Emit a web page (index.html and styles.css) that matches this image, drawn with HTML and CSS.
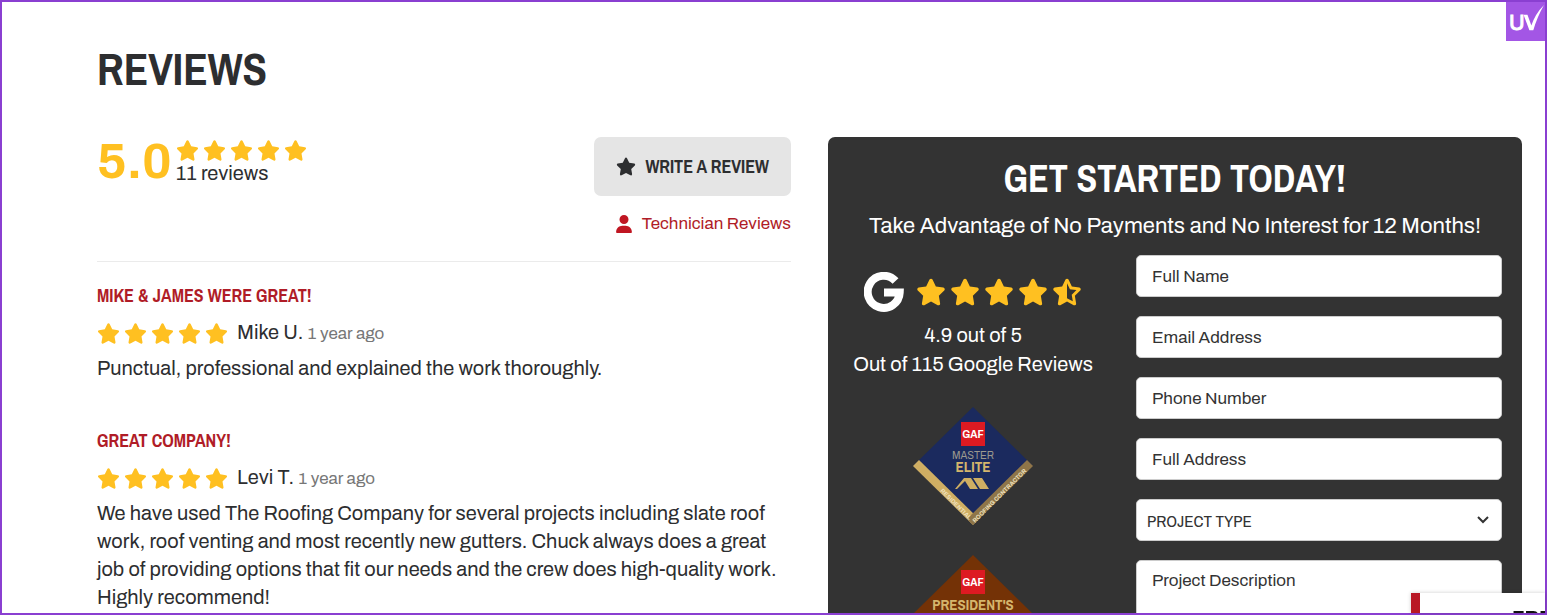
FILE: index.html
```
<!DOCTYPE html>
<html lang="en">
<head>
  <meta charset="UTF-8">
  <meta name="viewport" content="width=device-width, initial-scale=1.0">
  <title>Reviews</title>
  <link rel="stylesheet" href="styles.css">
</head>
<body>

  <!-- Shared icons -->
  <svg class="sprite" aria-hidden="true">
    <symbol id="star" viewBox="0 0 576 512">
      <path d="M316.9 18C311.6 7 300.4 0 288.1 0s-23.4 7-28.8 18L195 150.3 51.4 171.5c-12 1.8-22 10.2-25.7 21.7s-.7 24.2 7.9 32.7L137.8 329 113.2 474.7c-2 12 3 24.2 12.9 31.3s23 8 33.8 2.3l128.3-68.5 128.3 68.5c10.8 5.7 23.9 4.9 33.8-2.3s14.9-19.3 12.9-31.3L438.5 329 542.7 225.9c8.6-8.5 11.7-21.2 7.9-32.7s-13.7-19.9-25.7-21.7L381.2 150.3 316.9 18z"/>
    </symbol>
    <symbol id="half" viewBox="0 0 576 512">
      <path d="M288 376.4l.1-.1 26.4 14.1 85.2 45.5-16.5-97.6-4.8-28.7 20.7-20.5 70.1-69.3-96.1-14.2-29.3-4.3-12.9-26.6L288.1 86.9l-.1 .3V376.4zm175.1 98.3c2 12-3 24.2-12.9 31.3s-23 8-33.8 2.3L288.1 439.8 159.8 508.3C149 514 135.9 513.1 126 506s-14.9-19.3-12.9-31.3L137.8 329 33.6 225.9c-8.6-8.5-11.7-21.2-7.9-32.7s13.7-19.9 25.7-21.7L195 150.3 259.4 18c5.4-11 16.5-18 28.8-18s23.4 7 28.8 18l64.3 132.3 143.6 21.2c12 1.8 22 10.2 25.7 21.7s.7 24.2-7.9 32.7L438.5 329l24.6 145.7z"/>
    </symbol>
    <symbol id="user" viewBox="0 0 448 512">
      <path d="M224 256A128 128 0 1 0 224 0a128 128 0 1 0 0 256zm-45.7 48C79.8 304 0 383.8 0 482.3C0 498.7 13.3 512 29.7 512H418.3c16.4 0 29.7-13.3 29.7-29.7C448 383.8 368.2 304 269.7 304H178.3z"/>
    </symbol>
  </svg>

  <main class="page">
    <h1>Reviews</h1>

    <div class="columns">
      <section class="reviews">
        <div class="summary">
          <div class="score">
            <span class="number">5.0</span>
            <div class="total">
              <div class="stars">
                <svg><use href="#star"/></svg><svg><use href="#star"/></svg><svg><use href="#star"/></svg><svg><use href="#star"/></svg><svg><use href="#star"/></svg>
              </div>
              <span>11 reviews</span>
            </div>
          </div>
          <div class="actions">
            <button type="button" class="write"><svg><use href="#star"/></svg>Write a Review</button>
            <a href="#" class="tech"><svg><use href="#user"/></svg>Technician Reviews</a>
          </div>
        </div>

        <article class="review">
          <h2>Mike &amp; James were great!</h2>
          <div class="author">
            <div class="stars">
              <svg><use href="#star"/></svg><svg><use href="#star"/></svg><svg><use href="#star"/></svg><svg><use href="#star"/></svg><svg><use href="#star"/></svg>
            </div>
            <span>Mike U. <small>1 year ago</small></span>
          </div>
          <p>Punctual, professional and explained the work thoroughly.</p>
        </article>

        <article class="review">
          <h2>Great company!</h2>
          <div class="author">
            <div class="stars">
              <svg><use href="#star"/></svg><svg><use href="#star"/></svg><svg><use href="#star"/></svg><svg><use href="#star"/></svg><svg><use href="#star"/></svg>
            </div>
            <span>Levi T. <small>1 year ago</small></span>
          </div>
          <p>We have used The Roofing Company for several projects including slate roof work, roof venting and most recently new gutters. Chuck always does a great job of providing options that fit our needs and the crew does high-quality work. Highly recommend!</p>
        </article>
      </section>

      <section class="start">
        <h2>Get Started Today!</h2>
        <p class="offer">Take Advantage of No Payments and No Interest for 12 Months!</p>

        <div class="start-body">
          <div class="trust">
            <div class="google">
              <svg class="g" viewBox="0 0 40 40"><path d="M31.5 9A16 16 0 1 0 35.7 20.5H20"/></svg>
              <div class="stars large">
                <svg><use href="#star"/></svg><svg><use href="#star"/></svg><svg><use href="#star"/></svg><svg><use href="#star"/></svg><svg><use href="#half"/></svg>
              </div>
            </div>
            <p>4.9 out of 5<br>Out of 115 Google Reviews</p>

            <svg class="badge" viewBox="0 0 120 120">
              <path d="M60 0L119 58 60 117 1 58z" fill="#1b2a5e"/>
              <path d="M6 53L0 59 60 118 66 112z" fill="#cfae63"/>
              <path d="M114 53L120 59 60 118 54 112z" fill="#8f7548"/>
              <rect x="48" y="15" width="24" height="24" fill="#dd1a22"/>
              <text x="60" y="31" class="gaf">GAF</text>
              <text x="60" y="52" class="master">MASTER</text>
              <text x="60" y="65" class="elite">ELITE</text>
              <path d="M42 82L51 71H58L65 82H57L52 74 44 82zM60 71H69L76 82H67z" fill="#cfae63"/>
              <text class="band" transform="translate(27 84) rotate(45)">RESIDENTIAL</text>
              <text class="band" transform="translate(62 116) rotate(-45)">ROOFING CONTRACTOR</text>
            </svg>

            <svg class="badge" viewBox="0 0 120 120">
              <path d="M60 0L119 58 60 117 1 58z" fill="#743206"/>
              <rect x="48" y="15" width="24" height="24" fill="#dd1a22"/>
              <text x="60" y="31" class="gaf">GAF</text>
              <text x="60" y="55" class="president">PRESIDENT'S</text>
            </svg>
          </div>

          <form class="form">
            <input type="text" aria-label="Full Name" placeholder="Full Name">
            <input type="email" aria-label="Email Address" placeholder="Email Address">
            <input type="tel" aria-label="Phone Number" placeholder="Phone Number">
            <input type="text" aria-label="Full Address" placeholder="Full Address">
            <select aria-label="Project Type">
              <option>PROJECT TYPE</option>
            </select>
            <textarea aria-label="Project Description" placeholder="Project Description"></textarea>
          </form>
        </div>
      </section>
    </div>
  </main>

  <div class="uv">
    <svg viewBox="0 0 40 40">
      <text x="3" y="29">U</text>
      <path d="M18 13H22L26 24Q30 12 39 3 32 15 28 29H24z"/>
    </svg>
  </div>
  <aside class="popup">FREE</aside>

</body>
</html>
```
FILE: styles.css
```
* {
  box-sizing: border-box;
}

body {
  margin: 0;
  height: 100vh;
  overflow: hidden;
  border: 2px solid #8a3fd1;
  background-color: #fff;
  color: #2d2e30;
  font-family: "Archivo", "Liberation Sans", Arial, sans-serif;
  font-size: 20px;
  line-height: 28px;
}

h1, h2, p {
  margin: 0;
}

h1, h2, .write {
  font-family: "Archivo Narrow", "Liberation Sans Narrow", "Liberation Sans", sans-serif;
  font-weight: bold;
  text-transform: uppercase;
}

h1 {
  font-size: 45px;
  line-height: 54px;
}

.sprite {
  display: none;
}

.page {
  padding: 40px 23px 0 95px;
}

.columns {
  display: grid;
  grid-template-columns: 1fr 1fr;
  gap: 37px;
  margin-top: 41px;
}

.stars {
  display: flex;
  gap: 4px;
}

.stars svg {
  width: 23px;
  height: 21px;
  fill: #ffc021;
}

.summary {
  display: flex;
  justify-content: space-between;
  height: 125px;
  border-bottom: 1px solid #ebebeb;
}

.score {
  display: flex;
  gap: 4px;
}

.number {
  color: #ffc021;
  font-size: 50px;
  font-weight: bold;
  line-height: 50px;
}

.total {
  padding-top: 3px;
  line-height: 24px;
}

.actions {
  display: flex;
  flex-direction: column;
  align-items: flex-end;
  gap: 14px;
}

.write {
  display: flex;
  align-items: center;
  gap: 9px;
  padding: 0 22px;
  height: 59px;
  border: none;
  border-radius: 7px;
  background-color: #e5e5e5;
  color: #2d2e30;
  font-size: 18px;
  cursor: pointer;
}

.write svg {
  width: 20px;
  height: 19px;
  fill: #2d2e30;
}

.tech {
  display: flex;
  align-items: center;
  gap: 10px;
  color: #b01c27;
  font-size: 17px;
  text-decoration: none;
}

.tech svg {
  width: 16px;
  height: 18px;
  fill: #c01622;
}

.review {
  padding: 20px 0 25px;
}

.review h2 {
  color: #b01c27;
  font-size: 18px;
}

.author {
  display: flex;
  align-items: center;
  gap: 9px;
  padding: 8px 0 6px;
}

.author small {
  color: #777;
  font-size: 17px;
}

.start {
  padding: 20px;
  border-radius: 7px;
  background-color: #333;
  color: #fff;
  text-align: center;
}

.start h2 {
  font-size: 38px;
  line-height: 43px;
}

.offer {
  margin: 12px 0 15px;
  font-size: 22px;
}

.start-body {
  display: grid;
  grid-template-columns: 250px 1fr;
  gap: 38px;
  height: 340px;
}

.trust {
  display: flex;
  flex-direction: column;
  align-items: center;
  line-height: 29px;
}

.google {
  display: flex;
  align-items: center;
  gap: 12px;
  margin: 17px 0 9px;
}

.g {
  width: 40px;
  height: 40px;
  fill: none;
  stroke: #fff;
  stroke-width: 8px;
}

.large svg {
  width: 30px;
  height: 28px;
}

.badge {
  flex-shrink: 0;
  width: 120px;
  height: 120px;
  margin-top: 28px;
}

.badge text {
  fill: #d5b56c;
  font-size: 15px;
  font-weight: bold;
  text-anchor: middle;
}

.badge .gaf {
  fill: #fff;
  font-size: 10px;
}

.badge .master {
  fill: #9c998f;
  font-size: 10px;
  font-weight: normal;
}

.badge .elite, .badge .president {
  font-family: "Archivo Narrow", "Liberation Sans Narrow", sans-serif;
}

.badge .band {
  fill: #eee0bd;
  font-size: 6px;
  text-anchor: start;
}

.form {
  display: flex;
  flex-direction: column;
  gap: 19px;
}

.form input, .form select, .form textarea {
  flex-shrink: 0;
  width: 100%;
  height: 42px;
  padding: 0 15px;
  border: 1px solid #ccc;
  border-radius: 5px;
  background-color: #fff;
  color: #333;
  font-family: inherit;
  font-size: 17px;
}

.form ::placeholder {
  color: #333;
  opacity: 1;
}

.form select {
  appearance: none;
  padding: 0 10px;
  background-image: url("data:image/svg+xml,%3Csvg xmlns='http://www.w3.org/2000/svg' viewBox='0 0 16 16'%3E%3Cpath fill='none' stroke='%23333' stroke-width='2' d='M3 5l5 5 5-5'/%3E%3C/svg%3E");
  background-repeat: no-repeat;
  background-position: right 10px center;
  background-size: 16px;
  font-family: "Archivo Narrow", "Liberation Sans Narrow", sans-serif;
}

.form textarea {
  height: 120px;
  padding: 10px 15px;
  resize: none;
}

.uv {
  position: fixed;
  top: 2px;
  right: 2px;
  width: 39px;
  height: 39px;
  background-color: #a356e5;
}

.uv svg {
  display: block;
  fill: #fff;
  stroke: #fff;
  font-size: 22px;
  stroke-width: 0;
}

.uv text {
  stroke-width: 1px;
}

.popup {
  position: fixed;
  right: 2px;
  bottom: 2px;
  width: 134px;
  height: 20px;
  padding: 15px 0 0 92px;
  border-left: 9px solid #b91825;
  background-color: #fff;
  box-shadow: 0 0 4px rgba(0, 0, 0, 0.2);
  color: #111;
  font-weight: bold;
  line-height: 20px;
  overflow: hidden;
}
```
